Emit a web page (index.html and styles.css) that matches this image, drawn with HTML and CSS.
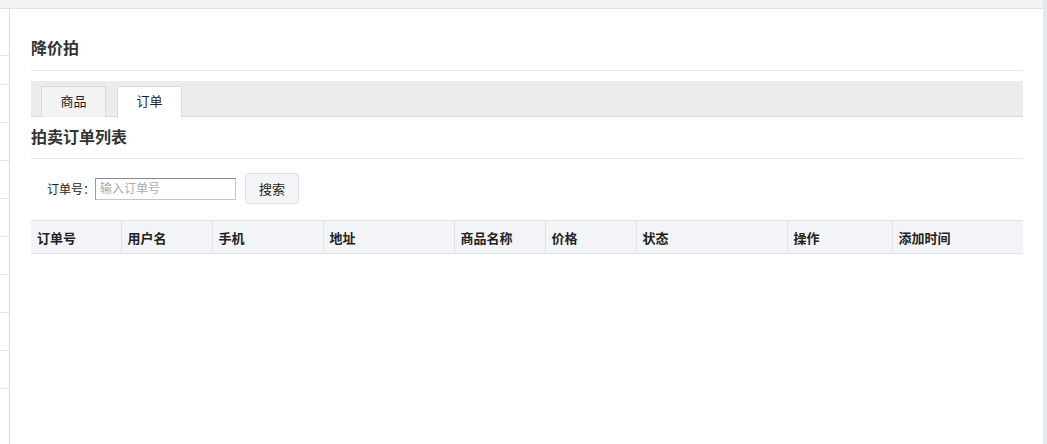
FILE: index.html
```html
<!DOCTYPE html>
<html lang="zh-CN">
<head>
    <meta charset="UTF-8">
    <meta name="viewport" content="width=device-width, initial-scale=1.0">
    <title>降价拍</title>
    <link rel="stylesheet" href="styles.css">
</head>
<body>
    <div class="top-bar"></div>
    <div class="frame">
        <div class="side">
            <div class="side-row"></div>
            <div class="side-row"></div>
            <div class="side-row"></div>
            <div class="side-row"></div>
            <div class="side-row"></div>
            <div class="side-row"></div>
            <div class="side-row"></div>
            <div class="side-row"></div>
            <div class="side-row"></div>
            <div class="side-row"></div>
        </div>
        <div class="main">
            <h2 class="page-title">降价拍</h2>
            <div class="tabs">
                <span class="tab">商品</span>
                <span class="tab active">订单</span>
            </div>
            <h3 class="section-title">拍卖订单列表</h3>
            <div class="search">
                <label for="orderNo">订单号：</label>
                <input type="text" id="orderNo" placeholder="输入订单号">
                <button>搜索</button>
            </div>
            <table class="list">
                <thead>
                    <tr>
                        <th class="c1">订单号</th>
                        <th class="c2">用户名</th>
                        <th class="c3">手机</th>
                        <th class="c4">地址</th>
                        <th class="c5">商品名称</th>
                        <th class="c6">价格</th>
                        <th class="c7">状态</th>
                        <th class="c8">操作</th>
                        <th class="c9">添加时间</th>
                    </tr>
                </thead>
                <tbody></tbody>
            </table>
        </div>
        <div class="scroll"></div>
    </div>
</body>
</html>
```
FILE: styles.css
```css
body {
    margin: 0;
    font-family: "Liberation Sans", "Noto Sans CJK SC", sans-serif;
    color: #333;
    background: #fff;
    height: 444px;
    overflow: hidden;
}
.top-bar {
    height: 8px;
    background: #f2f3f7;
    border-bottom: 1px solid #dde1ea;
    margin-right: 4px;
}
.frame {
    display: flex;
    height: 435px;
}
.side {
    flex: 0 0 10px;
    border-right: 1px solid #d6dbe5;
    padding-top: 46px;
    box-sizing: border-box;
}
.side-row {
    height: 37px;
    border-top: 1px solid #e2e5ec;
}
.side-row:first-child {
    height: 28px;
}
.main {
    flex: 1;
    min-width: 0;
    padding: 0 20px 0 21px;
}
.scroll {
    flex: 0 0 4px;
    background: #e6e8ef;
    margin-top: -9px;
}
.page-title {
    margin: 0;
    padding: 29px 0 10px;
    font-size: 16px;
    line-height: 22px;
    font-weight: bold;
    color: #333;
    border-bottom: 1px solid #e8e8e8;
}
.tabs {
    margin-top: 10px;
    height: 30px;
    padding: 5px 0 0 10px;
    background: #ececec;
    border-bottom: 1px solid #d3dae6;
    display: flex;
    gap: 11px;
}
.tab {
    width: 63px;
    height: 30px;
    line-height: 30px;
    text-align: center;
    font-size: 13px;
    color: #222;
    background: #f3f3f3;
    border: 1px solid #d5dbe6;
    border-bottom: none;
}
.tab.active {
    background: #fff;
    height: 31px;
}
.section-title {
    margin: 0;
    padding: 10px 0 9px;
    font-size: 16px;
    line-height: 22px;
    font-weight: bold;
    color: #333;
    border-bottom: 1px solid #e8e8e8;
}
.search {
    display: flex;
    align-items: center;
    margin-top: 14px;
    padding-left: 16px;
    font-size: 12px;
}
.search label {
    color: #222;
}
.search input {
    width: 141px;
    height: 22px;
    box-sizing: border-box;
    border: 1px solid #c4c4c4;
    border-top-color: #8a8a8a;
    border-left-color: #9a9a9a;
    padding: 0 4px;
    font-family: inherit;
    font-size: 12px;
    outline: none;
}
.search input::placeholder {
    color: #aaa;
}
.search button {
    margin-left: 9px;
    width: 54px;
    height: 31px;
    background: #f3f4f8;
    border: 1px solid #e0e2ea;
    border-radius: 3px;
    font-family: inherit;
    font-size: 13px;
    color: #222;
    cursor: pointer;
}
.list {
    margin-top: 16px;
    width: 992px;
    border-collapse: collapse;
    table-layout: fixed;
}
.list th {
    box-sizing: border-box;
    height: 33px;
    background: #f3f4f8;
    border: 1px solid #e0e2e8;
    text-align: left;
    padding: 0 0 0 6px;
    font-size: 13px;
    font-weight: bold;
    color: #222;
}
.list th:first-child {
    border-left: none;
}
.list th:last-child {
    border-right: none;
}
.c1 { width: 90px; }
.c2 { width: 91px; }
.c3 { width: 111px; }
.c4 { width: 131px; }
.c5 { width: 91px; }
.c6 { width: 91px; }
.c7 { width: 151px; }
.c8 { width: 105px; }
.c9 { width: 131px; }
```
